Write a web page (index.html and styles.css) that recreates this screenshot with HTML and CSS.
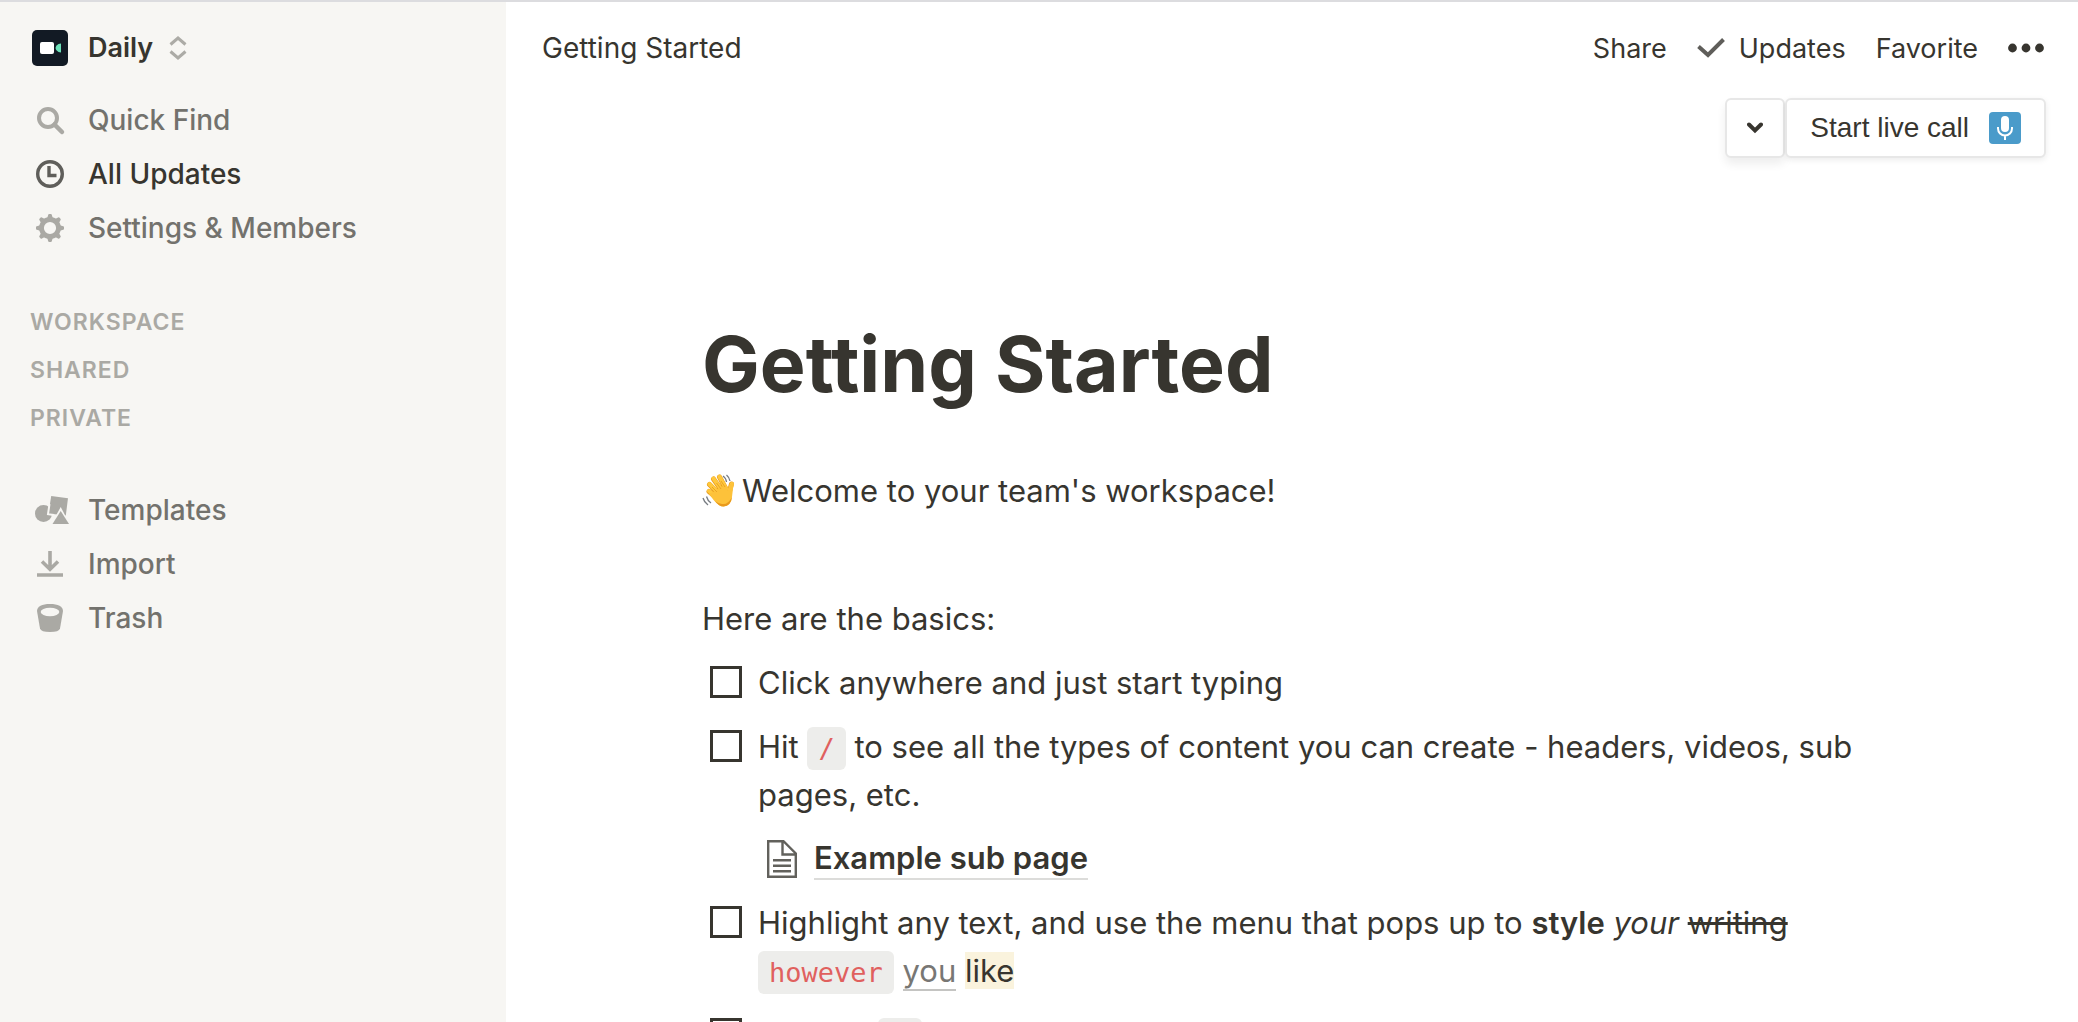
FILE: index.html
```html
<!DOCTYPE html>
<html lang="en">
<head>
  <meta charset="UTF-8">
  <meta name="viewport" content="width=device-width, initial-scale=1.0">
  <title>Getting Started</title>
  <link rel="stylesheet" href="styles.css">
</head>
<body>
  <div class="app">
    <aside class="sidebar">
      <button class="switcher" type="button">
        <svg class="logo" viewBox="0 0 36 36" aria-hidden="true">
          <rect width="36" height="36" rx="5" fill="#121a24"/>
          <rect x="8" y="12" width="14" height="12" rx="2" fill="#fff"/>
          <path d="M29 13.500V22.500L26.500 22Q23.500 20.500 23.500 18T26.500 14Z" fill="#6be0b8"/>
        </svg>
        <span>Daily</span>
        <svg class="sort" viewBox="0 0 18 24" aria-hidden="true">
          <path d="M1.500 8.500L9 2L16.500 8.500M1.500 15.500L9 22L16.500 15.500" fill="none" stroke="#acaba6" stroke-width="3"/>
        </svg>
      </button>

      <nav class="menu">
        <a class="item" href="#">
          <svg class="icon" viewBox="0 0 28 28" aria-hidden="true">
            <circle cx="12" cy="12" r="9" fill="none" stroke="currentColor" stroke-width="4"/>
            <path d="M18.500 18.500L26 26" stroke="currentColor" stroke-width="4.500" stroke-linecap="round"/>
          </svg>
          <span>Quick Find</span>
        </a>
        <a class="item active" href="#">
          <svg class="icon" viewBox="0 0 28 28" aria-hidden="true">
            <circle cx="14" cy="14" r="12.300" fill="none" stroke="currentColor" stroke-width="3.400"/>
            <path d="M13 6V15.500H20.500" fill="none" stroke="currentColor" stroke-width="3.400"/>
          </svg>
          <span>All Updates</span>
        </a>
        <a class="item" href="#">
          <svg class="icon" viewBox="0 0 28 28" aria-hidden="true">
            <circle cx="14" cy="14" r="8.500" fill="none" stroke="currentColor" stroke-width="4.800"/>
            <g fill="currentColor">
              <path id="tooth" d="M11 5L12.200 .8Q12.400 0 13.200 0H14.800Q15.600 0 15.800 .8L17 5Z"/>
              <use href="#tooth" transform="rotate(45 14 14)"/>
              <use href="#tooth" transform="rotate(90 14 14)"/>
              <use href="#tooth" transform="rotate(135 14 14)"/>
              <use href="#tooth" transform="rotate(180 14 14)"/>
              <use href="#tooth" transform="rotate(225 14 14)"/>
              <use href="#tooth" transform="rotate(270 14 14)"/>
              <use href="#tooth" transform="rotate(315 14 14)"/>
            </g>
          </svg>
          <span>Settings &amp; Members</span>
        </a>
      </nav>

      <div class="sections">
        <h2>WORKSPACE</h2>
        <h2>SHARED</h2>
        <h2>PRIVATE</h2>
      </div>

      <nav class="menu">
        <a class="item" href="#">
          <svg class="icon" viewBox="0 0 28 28" aria-hidden="true">
            <circle cx="7.500" cy="17.500" r="8.500" fill="currentColor"/>
            <path d="M15.200 0L32 2.300L29.800 19.500L12.500 17.500Z" fill="currentColor"/>
            <path d="M13.500 8L12 18.200L18 19" fill="none" stroke="#f7f6f3" stroke-width="2"/>
            <path d="M24.700 11L34.500 29.500H14.500Z" fill="#f7f6f3"/>
            <path d="M24.700 15L33 28H16.500Z" fill="currentColor"/>
          </svg>
          <span>Templates</span>
        </a>
        <a class="item" href="#">
          <svg class="icon" viewBox="0 0 28 28" aria-hidden="true">
            <path d="M14 1V19M6 11.500L14 19.200L22 11.500M1 25H27" fill="none" stroke="currentColor" stroke-width="3.600"/>
          </svg>
          <span>Import</span>
        </a>
        <a class="item" href="#">
          <svg class="icon" viewBox="0 0 28 28" aria-hidden="true">
            <path d="M1 7C1 2.500 6 0 14 0S27 2.500 27 7L24 24.500Q23 28 14 28T4 24.500Z" fill="currentColor"/>
            <ellipse cx="14" cy="8" rx="9.300" ry="4.200" fill="#f7f6f3"/>
          </svg>
          <span>Trash</span>
        </a>
      </nav>
    </aside>

    <main class="main">
      <header class="topbar">
        <a class="crumb" href="#">Getting Started</a>
        <div class="actions">
          <button type="button">Share</button>
          <button type="button">
            <svg class="check" viewBox="0 0 28 20" aria-hidden="true">
              <path d="M1.500 8.500L11 17L26.500 1.500" fill="none" stroke="#5f5e5a" stroke-width="4"/>
            </svg>
            Updates
          </button>
          <button type="button">Favorite</button>
          <button type="button" aria-label="More">
            <svg class="dots" viewBox="0 0 36 10" aria-hidden="true">
              <g fill="#37352f"><circle cx="4.500" cy="5" r="4.400"/><circle cx="18" cy="5" r="4.400"/><circle cx="31.500" cy="5" r="4.400"/></g>
            </svg>
          </button>
        </div>
      </header>

      <div class="call">
        <button class="call-toggle" type="button" aria-label="Call options">
          <svg class="chevron" viewBox="0 0 16 12" aria-hidden="true">
            <path d="M2 2.500L8 8.500L14 2.500" fill="none" stroke="#37352f" stroke-width="4" stroke-linecap="round"/>
          </svg>
        </button>
        <button class="call-start" type="button">
          Start live call
          <svg class="mic" viewBox="0 0 32 32" aria-hidden="true">
            <rect width="32" height="32" rx="4" fill="#4a9bca"/>
            <rect x="12" y="4" width="8" height="16" rx="4" fill="#fff"/>
            <path d="M9 15V16.500A7 7 0 0 0 23 16.500V15M16 23.500V28" fill="none" stroke="#fff" stroke-width="2"/>
          </svg>
        </button>
      </div>

      <article class="page">
        <h1>Getting Started</h1>
        <p class="welcome">
          <svg class="wave" viewBox="0 0 34 34" aria-hidden="true">
            <g fill="none" stroke-linecap="round">
              <path d="M7.500 10.500L17 20M11.500 5L20 17M17.500 3L24 15M7 17.500L15 24M27 19L29.500 10" stroke="#e89b1c" stroke-width="5"/>
              <path d="M7.500 10L17 19.500M11.500 4.700L20 16.500M17.500 2.700L24 14.500M7 17L15 23.500M27 18.500L29.800 10" stroke="#ffc83d" stroke-width="4"/>
            </g>
            <path d="M11 18L23 11Q26 14 26 17L28.500 10Q31 7.500 31.500 10L30 23Q29 32 21.500 32.500Q17 32.500 12 26.500L7 20Z" fill="#fdc23a"/>
            <path d="M13 27Q17 32.500 21.500 32.500Q29 32 30 23Q26 31 20 30Q16 29.500 13 27Z" fill="#e99a1d"/>
            <path d="M10 13L15 18M14.500 9L19 15M19 7L23 13" fill="none" stroke="#e9a425" stroke-width="1"/>
            <path d="M21 2Q24 4 24.500 8M24.500 1Q27.500 3.500 28 7M1 24Q2 28 6 31M4.500 22.500Q5.500 26.500 9 29" fill="none" stroke="#777c82" stroke-width="1.300"/>
          </svg>
          Welcome to your team's workspace!
        </p>
        <p class="intro">Here are the basics:</p>

        <div class="todo">
          <input type="checkbox" id="todo1">
          <label for="todo1">Click anywhere and just start typing</label>
        </div>
        <div class="todo">
          <input type="checkbox" id="todo2">
          <label for="todo2">Hit <code>/</code> to see all the types of content you can create - headers, videos, sub pages, etc.</label>
        </div>
        <a class="subpage" href="#">
          <svg class="doc" viewBox="0 0 30 38" aria-hidden="true">
            <path d="M1.200 1.200H16.500L28.800 13.500V36.800H1.200ZM15.500 1.500V14.500H28.500" fill="none" stroke="#62615c" stroke-width="2.400"/>
            <path d="M6 20.200H24M6 25.700H24M6 31.200H24" stroke="#62615c" stroke-width="2.400"/>
          </svg>
          <span>Example sub page</span>
        </a>
        <div class="todo">
          <input type="checkbox" id="todo3">
          <label for="todo3">Highlight any text, and use the menu that pops up to <b>style</b> <i>your</i> <s>writing</s> <code>however</code> <u>you</u> <mark>like</mark></label>
        </div>
        <div class="todo">
          <input type="checkbox" id="todo4">
          <label for="todo4">See the <code class="handle">⋮</code> to the left of this checkbox on hover? Click and drag to move this line</label>
        </div>
      </article>
    </main>
  </div>
</body>
</html>
```

FILE: styles.css
```css
* {
  box-sizing: border-box;
}
body {
  margin: 0;
  font-family: Inter, "Liberation Sans", sans-serif;
  font-size: 28px;
  color: #37352f;
  background: #fff;
}
h1, h2, p {
  margin: 0;
}
a {
  color: inherit;
  text-decoration: none;
}
button {
  border: none;
  background: none;
  padding: 0;
  font: inherit;
  color: inherit;
  cursor: pointer;
}
svg {
  display: block;
  flex: none;
}
.app {
  display: flex;
  height: 100vh;
  border-top: 2px solid #dcdcdf;
  overflow: hidden;
}

/* Sidebar */
.sidebar {
  flex: none;
  width: 506px;
  background: #f7f6f3;
}
.switcher {
  display: flex;
  align-items: center;
  width: 100%;
  height: 91px;
  padding-left: 32px;
  font-size: 27px;
  font-weight: 600;
}
.logo {
  width: 36px;
  height: 36px;
  margin-right: 20px;
}
.sort {
  width: 18px;
  height: 24px;
  margin-left: 16px;
}
.item {
  display: flex;
  align-items: center;
  gap: 24px;
  height: 54px;
  padding-left: 36px;
  font-weight: 500;
  color: #73726d;
}
.icon {
  width: 28px;
  height: 28px;
  color: #aaa9a4;
  overflow: visible;
}
.active {
  color: #37352f;
}
.active .icon {
  color: #5f5e5a;
}
.sections {
  padding: 43px 30px 41px;
}
.sections h2 {
  font-size: 23px;
  line-height: 48px;
  font-weight: 600;
  letter-spacing: 1px;
  color: #aaa9a4;
}

/* Top bar */
.main {
  flex: 1;
  min-width: 0;
  overflow: hidden;
}
.topbar {
  display: flex;
  align-items: center;
  justify-content: space-between;
  height: 92px;
  padding: 0 34px 0 36px;
}
.actions {
  display: flex;
  align-items: center;
  gap: 30px;
  font-size: 27px;
}
.actions button {
  display: flex;
  align-items: center;
  gap: 14px;
}
.check {
  width: 28px;
  height: 20px;
}
.dots {
  width: 36px;
  height: 10px;
}
.call {
  display: flex;
  justify-content: flex-end;
  padding: 4px 32px 0;
}
.call button {
  display: flex;
  align-items: center;
  justify-content: center;
  height: 60px;
  border: 2px solid #e7e7e7;
  border-radius: 6px;
  background: #fff;
  box-shadow: 0 2px 6px rgba(15, 15, 15, 0.08);
}
.call .call-toggle {
  width: 60px;
  box-shadow: 0 6px 10px rgba(15, 15, 15, 0.07);
}
.call .call-start {
  gap: 20px;
  padding: 0 23px;
  font-family: "Liberation Sans", Arial, sans-serif;
  font-size: 28px;
}
.chevron {
  width: 16px;
  height: 12px;
}
.mic {
  width: 32px;
  height: 32px;
}

/* Page content */
.page {
  display: flex;
  flex-direction: column;
  gap: 16px;
  padding: 158px 196px 0;
  font-size: 31px;
  line-height: 48px;
}
.page h1 {
  font-size: 77px;
  line-height: 96px;
  font-weight: 700;
}
.welcome {
  display: flex;
  align-items: center;
  gap: 6px;
  margin-top: 39px;
}
.wave {
  width: 34px;
  height: 34px;
}
.intro {
  margin-top: 64px;
}
.todo {
  display: flex;
  align-items: flex-start;
  gap: 16px;
  padding-left: 8px;
}
.todo input {
  appearance: none;
  flex: none;
  width: 32px;
  height: 32px;
  margin: 7px 0 0;
  border: 3px solid #37352f;
}
code {
  padding: 6px 11px;
  border-radius: 6px;
  font-family: "DejaVu Sans Mono", monospace;
  font-size: 27px;
  line-height: 1;
  color: #e0605e;
  background: #ededeb;
}
.handle {
  padding: 8px 11px;
  font-size: 22px;
}
b {
  font-weight: 600;
}
u {
  color: #787774;
  text-decoration: none;
  border-bottom: 2px solid #c4c4c2;
}
mark {
  color: inherit;
  background: #faf3dd;
}
.subpage {
  display: flex;
  align-items: center;
  gap: 17px;
  height: 48px;
  padding-left: 65px;
  font-weight: 600;
}
.subpage span {
  line-height: 40px;
  border-bottom: 2px solid #dcdcda;
}
.doc {
  width: 30px;
  height: 38px;
}
```
